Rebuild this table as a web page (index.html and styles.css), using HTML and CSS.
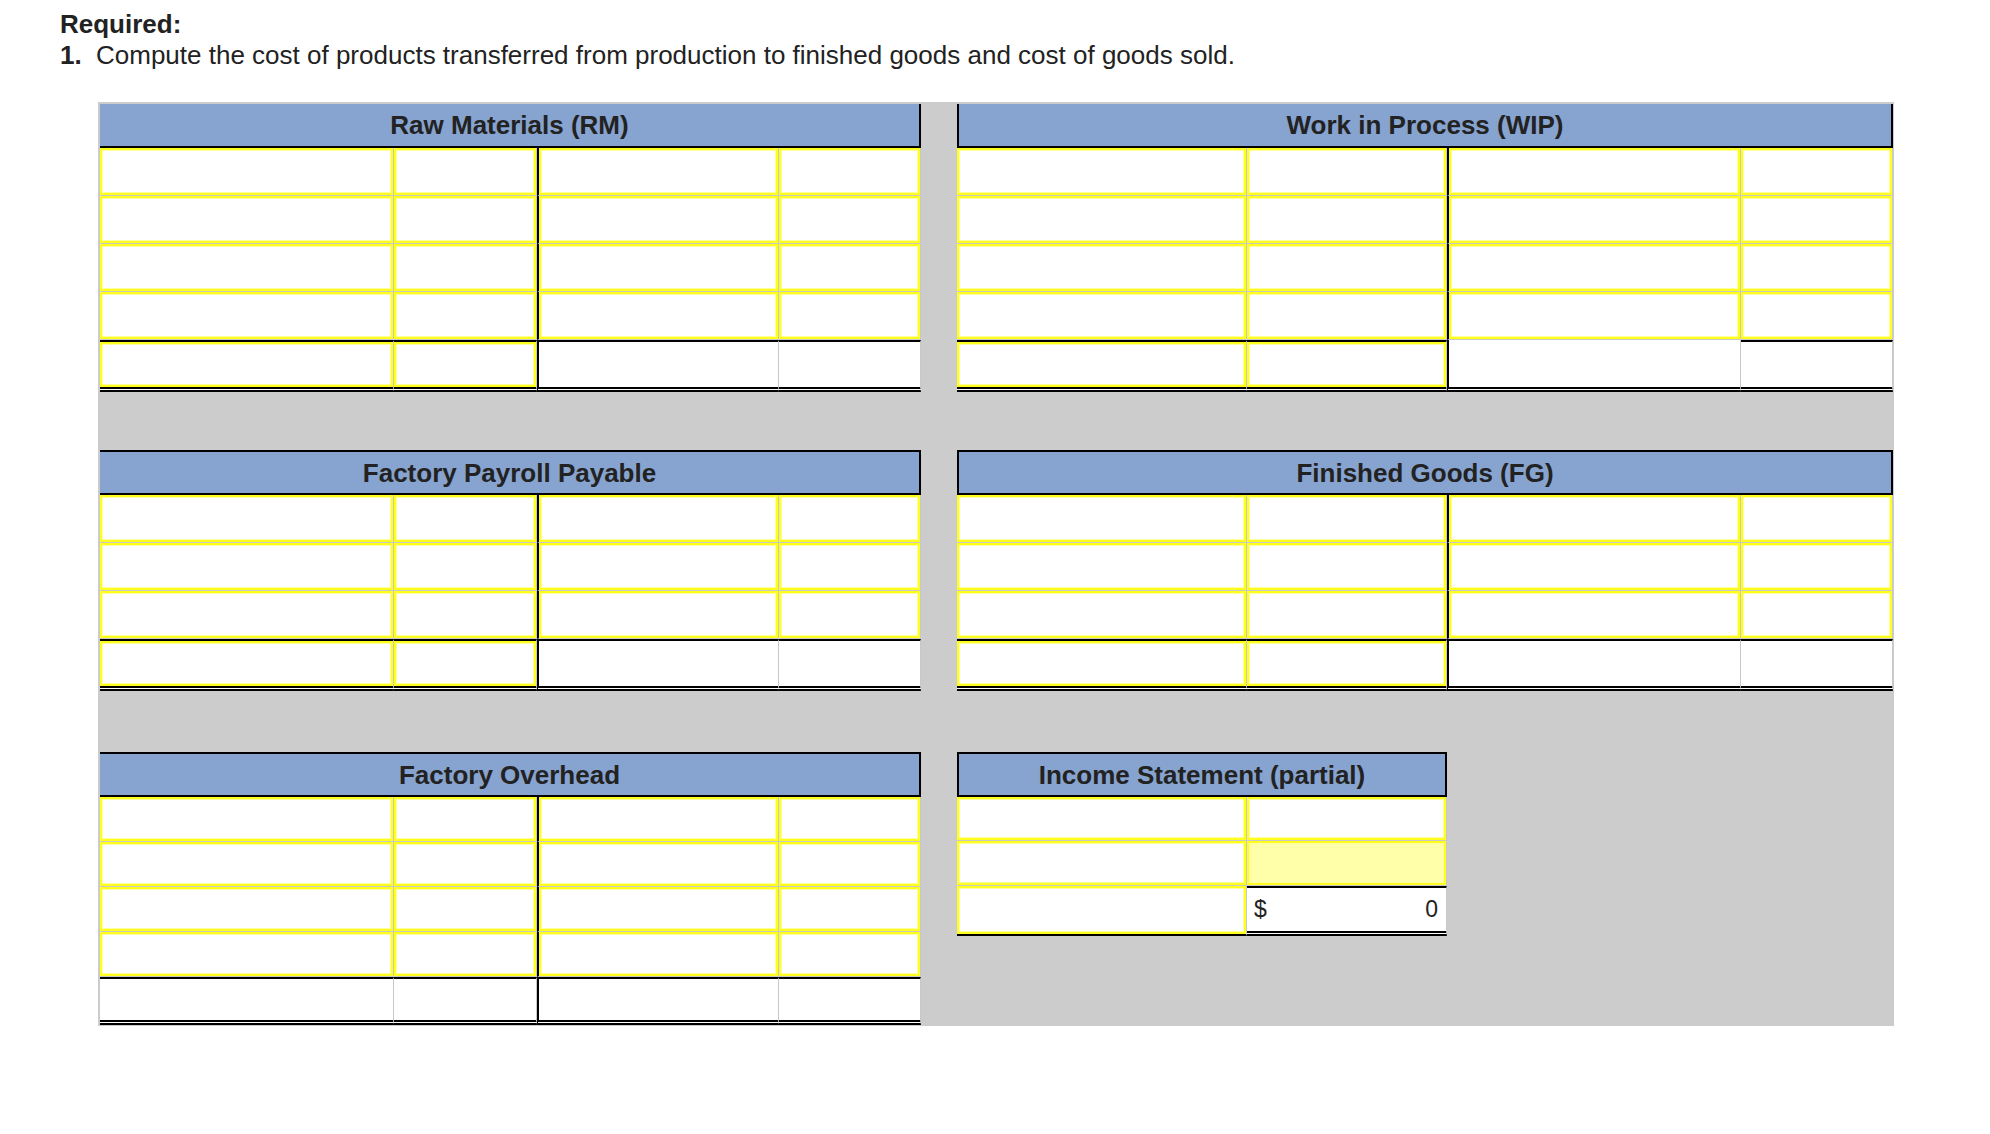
FILE: index.html
```html
<!DOCTYPE html>
<html lang="en">
<head>
<meta charset="utf-8">
<title>Required</title>
<link rel="stylesheet" href="styles.css">
</head>
<body>
<div class="intro">
  <p class="req">Required:</p>
  <p class="task"><span class="num">1.</span><span>Compute the cost of products transferred from production to finished goods and cost of goods sold.</span></p>
</div>
<div class="board">
  <section class="acct acct--l rows-5">
    <div class="acct-head">Raw Materials (RM)</div>
    <div class="acct-grid">
      <div class="c in"></div><div class="c in"></div><div class="c in mid"></div><div class="c in"></div>
      <div class="c in"></div><div class="c in"></div><div class="c in mid"></div><div class="c in"></div>
      <div class="c in"></div><div class="c in"></div><div class="c in mid"></div><div class="c in"></div>
      <div class="c in"></div><div class="c in"></div><div class="c in mid"></div><div class="c in"></div>
      <div class="c in top end"></div><div class="c in top end"></div><div class="c mid top end"></div><div class="c top end"></div>
    </div>
  </section>
  <section class="acct acct--r rows-5">
    <div class="acct-head">Work in Process (WIP)</div>
    <div class="acct-grid">
      <div class="c in"></div><div class="c in"></div><div class="c in mid"></div><div class="c in"></div>
      <div class="c in"></div><div class="c in"></div><div class="c in mid"></div><div class="c in"></div>
      <div class="c in"></div><div class="c in"></div><div class="c in mid"></div><div class="c in"></div>
      <div class="c in"></div><div class="c in"></div><div class="c in mid"></div><div class="c in"></div>
      <div class="c in top end"></div><div class="c in top end"></div><div class="c mid end"></div><div class="c top end"></div>
    </div>
  </section>
  <section class="acct acct--l acct--lower rows-4">
    <div class="acct-head">Factory Payroll Payable</div>
    <div class="acct-grid">
      <div class="c in"></div><div class="c in"></div><div class="c in mid"></div><div class="c in"></div>
      <div class="c in"></div><div class="c in"></div><div class="c in mid"></div><div class="c in"></div>
      <div class="c in"></div><div class="c in"></div><div class="c in mid"></div><div class="c in"></div>
      <div class="c in top end"></div><div class="c in top end"></div><div class="c mid top end"></div><div class="c top end"></div>
    </div>
  </section>
  <section class="acct acct--r acct--lower rows-4">
    <div class="acct-head">Finished Goods (FG)</div>
    <div class="acct-grid">
      <div class="c in"></div><div class="c in"></div><div class="c in mid"></div><div class="c in"></div>
      <div class="c in"></div><div class="c in"></div><div class="c in mid"></div><div class="c in"></div>
      <div class="c in"></div><div class="c in"></div><div class="c in mid"></div><div class="c in"></div>
      <div class="c in top end"></div><div class="c in top end"></div><div class="c mid top end"></div><div class="c top end"></div>
    </div>
  </section>
  <section class="acct acct--l acct--lower acct--row3 rows-5s">
    <div class="acct-head">Factory Overhead</div>
    <div class="acct-grid">
      <div class="c in"></div><div class="c in"></div><div class="c in mid"></div><div class="c in"></div>
      <div class="c in"></div><div class="c in"></div><div class="c in mid"></div><div class="c in"></div>
      <div class="c in"></div><div class="c in"></div><div class="c in mid"></div><div class="c in"></div>
      <div class="c in"></div><div class="c in"></div><div class="c in mid"></div><div class="c in"></div>
      <div class="c top end"></div><div class="c top end"></div><div class="c mid top end"></div><div class="c top end"></div>
    </div>
  </section>
  <section class="acct acct--r acct--lower acct--row3 is">
    <div class="acct-head">Income Statement (partial)</div>
    <div class="acct-grid">
      <div class="c in"></div><div class="c in"></div>
      <div class="c in"></div><div class="c in fill"></div>
      <div class="c in line"></div><div class="c top end total"><span>$</span><span>0</span></div>
    </div>
  </section>
</div>
</body>
</html>
```

FILE: styles.css
```css
* { box-sizing: border-box; }

body {
  margin: 0;
  background: #fff;
  font-family: "Liberation Sans", Arial, sans-serif;
  color: #222;
}

.intro {
  padding: 9px 0 0 60px;
  font-size: 26px;
  line-height: 31px;
}
.intro p { margin: 0; }
.req { font-weight: bold; }
.task { display: flex; }
.num { font-weight: bold; width: 36px; flex: none; }

.board {
  margin: 31px 0 0 98px;
  width: 1796px;
  padding: 2px 1px 1px 2px;
  background: #cccccc;
  display: grid;
  grid-template-columns: 821px 936px;
  column-gap: 36px;
  row-gap: 58px;
  align-items: start;
}
.acct--row3 { margin-top: 3px; }

.acct-head {
  height: 44px;
  background: #87a3cf;
  border-bottom: 2px solid #000;
  border-right: 2px solid #000;
  font-weight: bold;
  font-size: 26px;
  line-height: 42px;
  text-align: center;
  color: #222;
}
.acct--r .acct-head { border-left: 2px solid #000; }
.acct--lower .acct-head {
  height: 45px;
  border-top: 2px solid #000;
  line-height: 42px;
}

.acct-grid { display: grid; background: #fff; }
.acct--l .acct-grid { grid-template-columns: 294px 143px 242px 142px; }
.acct--r .acct-grid { grid-template-columns: 290px 200px 294px 152px; }
.rows-5 .acct-grid { grid-template-rows: 48px 48px 48px 48px 52px; }
.rows-4 .acct-grid { grid-template-rows: 48px 48px 48px 52px; }
.rows-5s .acct-grid { grid-template-rows: 45px 45px 45px 45px 48px; }

.is { width: 490px; justify-self: start; }
.is .acct-grid {
  grid-template-columns: 290px 200px;
  grid-template-rows: 44px 45px 50px;
}

.c {
  background: #fff;
  border-right: 1px solid #c8c8c8;
  border-bottom: 1px solid #c8c8c8;
}
.c.in { box-shadow: inset 0 0 0 2px #ffff1e, inset 0 0 0 3px #ffffa0; }
.c.mid { border-left: 2px solid #000; }
.c.top { border-top: 2px solid #000; }
.c.end { border-bottom: 5px double #000; }
.c.line { border-bottom: 2px solid #000; }
.c.fill { background: #ffffaa; }
.c.total {
  display: flex;
  justify-content: space-between;
  align-items: center;
  padding: 0 8px 0 7px;
  font-size: 23px;
  color: #222;
}
```
